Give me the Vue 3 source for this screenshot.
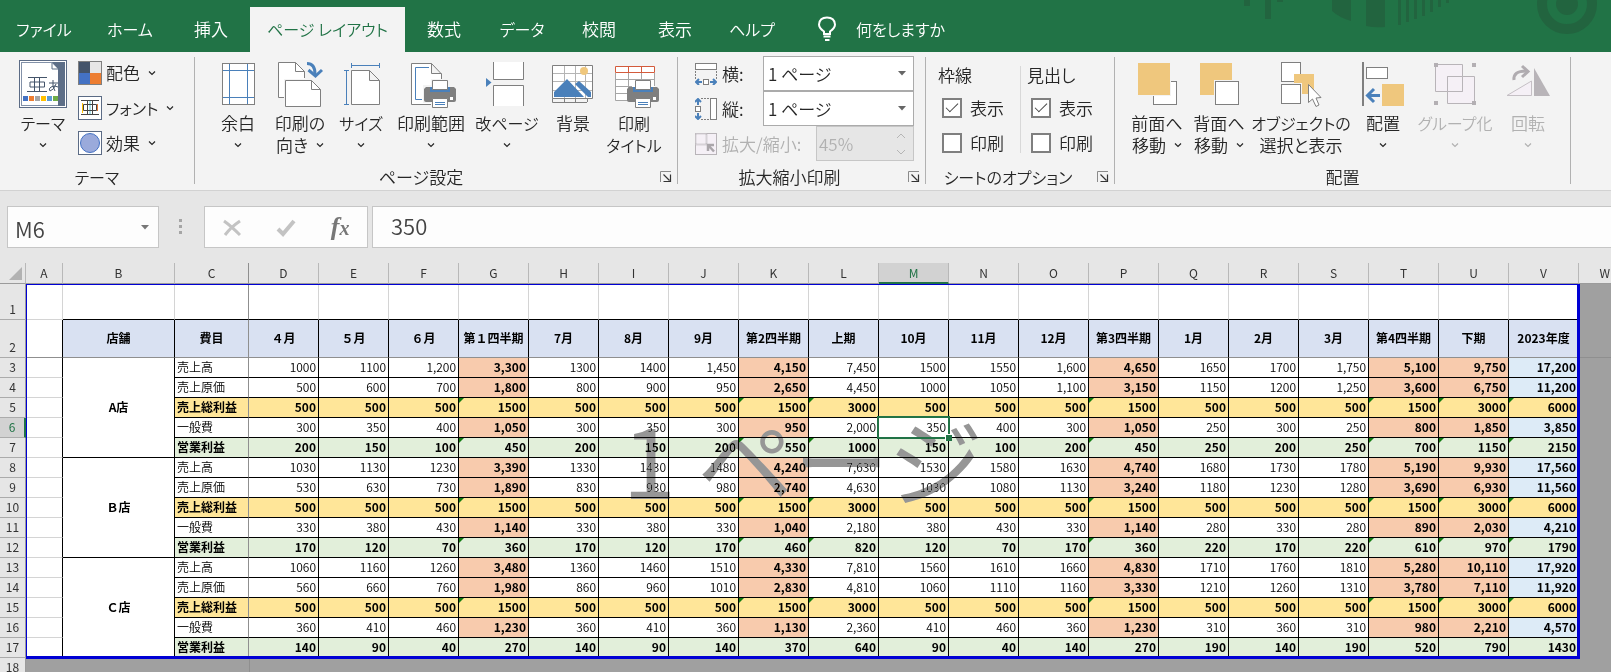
<template>
  <div class="excel">
    <svg class="defs" width="0" height="0" aria-hidden="true">
      <defs>
        <path id="chevron" d="M1 1.5 L4 4.5 L7 1.5" fill="none" stroke="currentColor" stroke-width="1.2" />
        <g id="launcher" fill="none">
          <path d="M0.5 11 V0.5 H11" stroke="#8a8a8a" />
          <path d="M3.5 3.5 L9.5 9.5 M10.5 3.5 V10.5 H3.5" stroke="#333" stroke-width="1.2" />
        </g>
        <g id="printer">
          <path d="M19 27 H47 L49 29 V40 Q49 42 47 42 H19 Q17 42 17 40 V29 Z" fill="#7f7f7f" />
          <path d="M23 27 H43 V32 H23 Z" fill="#4a80ba" />
          <path d="M25.5 20.5 H40.5 V29.5 H25.5 Z M25.5 38.5 H40.5 V47.5 H25.5 Z" fill="#fff" stroke="#7f7f7f" />
          <path d="M28 42.500 H38 M28 44.500 H38" stroke="#4a80ba" />
          <path d="M43 37 H46 V40 H43 Z" fill="#fff" />
        </g>
        <g id="theme">
          <rect x="0.5" y="0.5" width="47" height="47" fill="#fff" stroke="#5b6b85" />
          <path d="M2 2 H46 V46 H2 Z" fill="#8391a8" />
          <path d="M39 2 H46 V46 H39 Z" fill="#5d6e87" />
          <path d="M33 2 H39 V9 Z" fill="#5d6e87" />
          <path d="M3 3 H33 L39 9 V45 H3 Z" fill="#fff" />
          <path d="M33 3 V9 H39" fill="none" stroke="#5d6e87" />
          <path d="M9 17.500 H28 M8 31.500 H28 M15.500 17.500 V31 M20.500 17.500 V31 M11 22 H25.500 V27 H11 Z" fill="none" stroke="#44546a" />
          <path d="M30 23 H39 M34 20 Q33 27 36 31 M37 24 Q35 30 31 31 Q29 29 32 27 Q36 25 39 27" fill="none" stroke="#44546a" />
          <path d="M4 36 h5 v5 h-5z" fill="#4472c4" />
          <path d="M10 36 h5 v5 h-5z" fill="#ed7d31" />
          <path d="M16 36 h5 v5 h-5z" fill="#a5a5a5" />
          <path d="M22 36 h5 v5 h-5z" fill="#ffc000" />
          <path d="M28 36 h5 v5 h-5z" fill="#5b9bd5" />
          <path d="M34 36 h5 v5 h-5z" fill="#70ad47" />
        </g>
        <g id="colors">
          <path d="M0 0 H24 V24 H0 Z" fill="#7f7f7f" />
          <path d="M1 1 H12 V12 H1 Z" fill="#44546a" />
          <path d="M12 1 H23 V12 H12 Z" fill="#e7e6e6" />
          <path d="M1 12 H12 V23 H1 Z" fill="#4472c4" />
          <path d="M12 12 H23 V23 H12 Z" fill="#ed7d31" />
        </g>
        <g id="fonts">
          <rect x="0.5" y="0.5" width="23" height="23" fill="#fff" stroke="#5b6b85" />
          <path d="M4.500 7 V17" stroke="#ffc000" />
          <path d="M12 5 V18" stroke="#5bc5d5" />
          <path d="M19.500 8 V15" stroke="#ed7d31" />
          <path d="M3 4.500 H21 M3 18.500 H21 M9.500 5 V18 M14.500 5 V18 M5.500 8.500 H18.500 V14.500 H5.500 Z" fill="none" stroke="#444" />
        </g>
        <g id="effects">
          <rect x="0.5" y="0.5" width="23" height="23" fill="#fff" stroke="#5b6b85" />
          <circle cx="12" cy="12" r="9.5" fill="#9aaadb" stroke="#4472c4" />
        </g>
        <g id="margins" fill="none">
          <rect x="8.5" y="3.5" width="32" height="41" fill="#fff" stroke="#7f7f7f" />
          <path d="M15.500 4 V44 M33.500 4 V44 M9 10.500 H40 M9 37.500 H40" stroke="#4a80ba" />
        </g>
        <g id="orientation" stroke="#7f7f7f">
          <path d="M2.500 37.500 V2.500 H19.500 L28.500 11.500 V37.500 Z" fill="#fff" stroke="none" />
          <path d="M8 37.500 H2.500 V2.500 H19.500 L28.500 11.500 V18" fill="none" />
          <path d="M19.500 2.500 V11.500 H28.500" fill="none" />
          <path d="M8 19 H37 V38 H8 Z" fill="#f3f3f3" stroke="none" />
          <path d="M9.500 20.500 H35.500 L44.500 29.500 V46.500 H9.500 Z" fill="#fff" />
          <path d="M35.500 20.500 V29.500 H44.500" fill="none" />
          <path d="M31 3.500 Q39 3.500 39 14" fill="none" stroke="#4a80ba" stroke-width="3" />
          <path d="M32.500 10 L39.500 16 L46 10" fill="none" stroke="#4a80ba" stroke-width="3" />
        </g>
        <g id="size">
          <path d="M14.500 10.500 H32.500 L42.500 20.500 V44.500 H14.500 Z M32.500 10.500 V20.500 H42.500" fill="#fff" stroke="#7f7f7f" />
          <path d="M14.500 3 V8 M42.500 3 V8 M14.500 5.500 H42.500 M7 10.500 H12 M7 44.500 H12 M9.500 10.500 V44.500" fill="none" stroke="#4a80ba" />
        </g>
        <g id="area">
          <path d="M4.500 3.500 H24.500 L34.500 14 V44.500 H4.500 Z M24.500 3.500 V13.500 H34.500" fill="#fff" stroke="#7f7f7f" />
          <path d="M22 7.500 H8.500 V39.500 H15" fill="none" stroke="#4a80ba" />
          <path d="M24 19 H36 V26 H24 Z M16 25 H36 V43 H16 Z M24 43 H36 V46 H24 Z" fill="#f3f3f3" />
          <use href="#printer" />
        </g>
        <g id="breaks">
          <path d="M3 18 L8.500 22.500 L3 27 Z" fill="#4a80ba" />
          <path d="M10.500 2 V19.500 H40.500 V2 M10.500 46 V25.500 H40.500 V46" fill="#fff" stroke="#7f7f7f" />
        </g>
        <g id="background">
          <path d="M3.500 5.500 H43.500 V38.500 H3.500 Z" fill="#fff" stroke="#7f7f7f" />
          <path d="M15.500 6 V38 M26.500 6 V38 M36.500 6 V38 M4 13.500 H43 M4 21.500 H43 M4 30.500 H43" stroke="#b5b5b5" />
          <circle cx="35" cy="11" r="4" fill="#efc77d" />
          <path d="M5 37 V32 L18 19 L35 37 Z M26 24 L30 21 L42 32 V37 H39 Z" fill="#4a80ba" />
          <path d="M3.500 38.500 V42.500 H38 M15.500 39 V42 M26.500 39 V42 M38.500 39 V42" fill="none" stroke="#7f7f7f" />
        </g>
        <g id="titles">
          <path d="M5 6 H45 V40 H5 Z" fill="#fff" />
          <path d="M5.500 13 V40.500 H20 M18.500 13 V40 M31.500 13 V20 M44.500 13 V26 M6 19.500 H44 M6 26.500 H22 M6 33.500 H18" fill="none" stroke="#a5a5a5" />
          <path d="M5.500 6.500 H44.500 V12.500 H5.500 Z M18.500 6.500 V12.500 M31.500 6.500 V12.500" fill="none" stroke="#d35b3c" />
          <use href="#printer" />
        </g>
        <g id="forward">
          <rect x="20.500" y="21.500" width="23" height="23" fill="#fff" stroke="#7f7f7f" />
          <path d="M4 2 H38 V36 H4 Z" fill="#f3f3f3" />
          <path d="M5 3 H37 V35 H5 Z" fill="#efc77d" />
        </g>
        <g id="backward">
          <path d="M5 3 H37 V35 H5 Z" fill="#efc77d" />
          <path d="M19 20 H45 V46 H19 Z" fill="#f3f3f3" />
          <rect x="20.500" y="21.500" width="23" height="23" fill="#fff" stroke="#7f7f7f" />
        </g>
        <g id="selection">
          <rect x="4.500" y="2.500" width="19" height="19" fill="#fff" stroke="#7f7f7f" />
          <path d="M17 14 H37 V34 H25 V23 H17 Z" fill="#efc77d" />
          <rect x="4.500" y="24.500" width="19" height="19" fill="#fff" stroke="#7f7f7f" />
          <path d="M31.500 24.500 V42.500 L35.500 39 L39 46.500 L42 45 L39 38 L44 37.500 Z" fill="#fff" stroke="#7f7f7f" />
        </g>
        <g id="align">
          <path d="M4 2 V46" stroke="#7f7f7f" stroke-width="2" />
          <rect x="7.500" y="7.500" width="21" height="11" fill="#fff" stroke="#7f7f7f" />
          <path d="M23 24 H45 V46 H23 Z" fill="#efc77d" />
          <path d="M21 35.500 H9 M15 29 L8.500 35.500 L15 42" fill="none" stroke="#4a80ba" stroke-width="3" />
        </g>
        <g id="group">
          <path d="M4.500 4.500 H31.500 V31.500 H4.500 Z M16.500 16.500 H43.500 V43.500 H16.500 Z" fill="#f5f0f6" stroke="#b8b4b8" />
          <path d="M16.500 31.500 V16.500 H31.500 V31.500 Z" fill="#f5f0f6" stroke="#b8b4b8" />
          <path d="M3 3 h4 v4 h-4z M41 3 h4 v4 h-4z M3 41 h4 v4 h-4z M41 41 h4 v4 h-4z" fill="#b3afb3" />
        </g>
        <g id="rotate">
          <path d="M30 8 V36 H46 Z" fill="#b8b4b8" />
          <path d="M27.500 21 V35.500 H3 Z" fill="#f5f0f6" stroke="#c5c0c5" />
          <path d="M10 20 Q9 11 22 11" fill="none" stroke="#b0acb0" stroke-width="3" />
          <path d="M18 6 L24 11.500 L18 17" fill="none" stroke="#b0acb0" stroke-width="3" />
        </g>
        <g id="fit-width">
          <rect x="0.5" y="0.5" width="21" height="6" fill="#fff" stroke="#7f7f7f" />
          <path d="M0.500 8 V16 M21.500 8 V16" stroke="#7f7f7f" stroke-dasharray="2 1" />
          <rect x="8.500" y="16.500" width="5" height="5" fill="#fff" stroke="#7f7f7f" />
          <path d="M7 19 H2 M4 16 L1 19 L4 22 M15 19 H20 M18 16 L21 19 L18 22" fill="none" stroke="#4a80ba" stroke-width="2" />
        </g>
        <g id="fit-height">
          <rect x="15.500" y="0.500" width="6" height="21" fill="#fff" stroke="#7f7f7f" />
          <path d="M6 0.500 H14 M6 21.500 H14" stroke="#7f7f7f" stroke-dasharray="2 1" />
          <rect x="0.500" y="8.500" width="5" height="5" fill="#fff" stroke="#7f7f7f" />
          <path d="M3 7 V2 M0 4 L3 1 L6 4 M3 15 V20 M0 18 L3 21 L6 18" fill="none" stroke="#4a80ba" stroke-width="2" />
        </g>
        <g id="scale">
          <rect x="0.500" y="0.500" width="21" height="21" fill="#f5f0f6" stroke="#b8b4b8" />
          <rect x="0.500" y="0.500" width="11" height="11" fill="#f5f0f6" stroke="#b8b4b8" stroke-width="2" stroke-dasharray="1 1" />
          <path d="M13 18 V12 H19 M13 12 L19 18.500" fill="none" stroke="#aaa6aa" stroke-width="2.500" />
        </g>
      </defs>
    </svg>

    <nav class="tabs">
      <button v-for="tab in tabs" :key="tab.name" :class="['tab', tab.size, { active: tab.active, kana: tab.kana }]">{{ tab.name }}</button>
      <button class="tell-me">
        <svg width="18" height="26" viewBox="0 0 18 26" fill="none" stroke="#fff" stroke-width="2">
          <path d="M6 18 V15.500 Q1 12 1 8.500 Q1.500 1.500 9 1.500 Q16.500 1.500 17 8.500 Q17 12 12 15.500 V18 Z M5.500 20.500 H12.500 M7 24 H11.500" />
        </svg>
        <span>何をしますか</span>
      </button>
      <svg class="decoration" width="380" height="52" viewBox="0 0 380 52" fill="#22643f">
        <path d="M13 0 h6 v6 h-6z M34 0 h6 v19 h-6z M46 0 h6 v2 h-6z" />
        <path d="M101 0 H120 V21 Q109 18 101 11 Z M135 0 H154 V27 Q144 28 135 26 Z" />
        <path d="M167 0 h3 v25 h-3z M175 0 h3 v22 h-3z M183 0 h3 v19 h-3z M191 0 h3 v16 h-3z M199 0 h3 v12 h-3z M207 0 h3 v7 h-3z M215 0 h3 v3 h-3z" />
        <circle cx="336" cy="4" r="25" fill="none" stroke="#22643f" stroke-width="10" />
        <circle cx="336" cy="4" r="11" />
      </svg>
    </nav>

    <div class="ribbon">
      <section class="group themes">
        <div class="content">
          <button class="big">
            <svg width="48" height="48"><use href="#theme" /></svg>
            <span class="kana">テーマ</span>
            <span class="line"><svg width="8" height="6"><use href="#chevron" /></svg></span>
          </button>
          <div class="stack">
            <button v-for="item in themeItems" :key="item.name" class="small">
              <svg width="24" height="24"><use :href="'#' + item.icon" /></svg>
              <span :class="{ kana: item.kana }">{{ item.name }}</span>
              <svg class="after" width="8" height="6"><use href="#chevron" /></svg>
            </button>
          </div>
        </div>
        <footer class="kana">テーマ</footer>
      </section>

      <section class="group setup">
        <div class="content">
          <button v-for="item in setupItems" :key="item.icon" :class="['big', { kana: item.kana }]" :style="{ width: item.width + 'px' }">
            <svg width="48" height="48"><use :href="'#' + item.icon" /></svg>
            <span>{{ item.lines[0] }}</span>
            <span class="line">{{ item.lines[1] }}<svg v-if="item.menu" width="8" height="6"><use href="#chevron" /></svg></span>
          </button>
        </div>
        <footer>ページ設定</footer>
        <button class="launcher" aria-label="ページ設定"><svg width="12" height="12"><use href="#launcher" /></svg></button>
      </section>

      <section class="group scaling">
        <div class="fields">
          <div class="field">
            <svg width="22" height="22"><use href="#fit-width" /></svg>
            <label for="fit-w">横:</label>
            <div class="combo">
              <select id="fit-w"><option>1 ページ</option></select>
              <svg width="8" height="5"><path d="M0 0 H8 L4 4.500 Z" fill="#666" /></svg>
            </div>
          </div>
          <div class="field">
            <svg width="22" height="22"><use href="#fit-height" /></svg>
            <label for="fit-h">縦:</label>
            <div class="combo">
              <select id="fit-h"><option>1 ページ</option></select>
              <svg width="8" height="5"><path d="M0 0 H8 L4 4.500 Z" fill="#666" /></svg>
            </div>
          </div>
          <div class="field disabled">
            <svg width="22" height="22"><use href="#scale" /></svg>
            <label for="zoom">拡大/縮小:</label>
            <div class="spinner">
              <input id="zoom" type="text" value="45%" disabled>
              <svg width="10" height="22" fill="none" stroke="#b5b5b5"><path d="M1 5 L5 1 L9 5 M1 17 L5 21 L9 17" /></svg>
            </div>
          </div>
        </div>
        <footer>拡大縮小印刷</footer>
        <button class="launcher" aria-label="拡大縮小印刷"><svg width="12" height="12"><use href="#launcher" /></svg></button>
      </section>

      <section class="group options">
        <div class="option-columns">
          <div v-for="(name, i) in ['枠線', '見出し']" :key="name" class="option-column">
            <div class="heading">{{ name }}</div>
            <label class="check" :for="'view' + i"><input :id="'view' + i" type="checkbox" checked>表示</label>
            <label class="check" :for="'print' + i"><input :id="'print' + i" type="checkbox">印刷</label>
          </div>
        </div>
        <footer class="kana">シートのオプション</footer>
        <button class="launcher" aria-label="シートのオプション"><svg width="12" height="12"><use href="#launcher" /></svg></button>
      </section>

      <section class="group arrange">
        <div class="content">
          <button v-for="item in arrangeItems" :key="item.icon" class="big" :disabled="item.disabled" :style="{ width: item.width + 'px' }">
            <svg width="48" height="48"><use :href="'#' + item.icon" /></svg>
            <span :class="{ kana: item.kana }">{{ item.lines[0] }}</span>
            <span class="line">{{ item.lines[1] }}<svg v-if="item.menu" width="8" height="6"><use href="#chevron" /></svg></span>
          </button>
        </div>
        <footer>配置</footer>
      </section>
    </div>

    <div class="formula-bar">
      <div class="name-box">
        <input type="text" value="M6" aria-label="名前ボックス">
        <svg width="8" height="5"><path d="M0 0 H8 L4 4.500 Z" fill="#777" /></svg>
      </div>
      <svg class="dots" width="3" height="16" fill="#a5a5a5"><path d="M0 0 h3 v3 h-3z M0 6 h3 v3 h-3z M0 12 h3 v3 h-3z" /></svg>
      <div class="actions">
        <button aria-label="キャンセル">
          <svg width="18" height="18" fill="none" stroke="#c3c3c3" stroke-width="3"><path d="M1 2 Q8 7 17 16 M17 2 Q8 8 2 16" /></svg>
        </button>
        <button aria-label="入力">
          <svg width="20" height="18" fill="none" stroke="#c3c3c3" stroke-width="4"><path d="M2 10 L7 15 L18 2" /></svg>
        </button>
        <button class="fx" aria-label="関数の挿入"><i>f</i><i class="x">x</i></button>
      </div>
      <input class="formula" type="text" value="350" aria-label="数式バー">
    </div>

    <main class="sheet">
      <table>
        <colgroup>
          <col class="col-num"><col class="col-a"><col class="col-b"><col class="col-c">
          <col v-for="n in 19" :key="n" class="col-value">
          <col>
        </colgroup>
        <thead>
          <tr>
            <th class="corner"><svg width="14" height="14"><path d="M13 0 V13 H0 Z" fill="#b2b2b2" /></svg></th>
            <th v-for="l in letters" :key="l" :class="{ selected: l === 'M', frozen: l === 'C', last: l === 'W' }">{{ l }}</th>
          </tr>
        </thead>
        <tbody>
          <tr class="row-1">
            <th>1</th>
            <td class="blank"></td>
            <td v-for="n in 21" :key="n" :class="['blank', 'top', { frozen: n === 2 }]"></td>
            <td class="outside"></td>
          </tr>
          <tr class="row-2">
            <th>2</th>
            <td class="blank edge"></td>
            <td v-for="(h, i) in headings" :key="h" :class="['heading-cell', { frozen: i === 1 }]">{{ h }}</td>
            <td class="outside"></td>
          </tr>
          <tr v-for="(row, r) in rows" :key="r" :class="row.kind">
            <th :class="{ selected: r === 3 }">{{ r + 3 }}</th>
            <td class="blank edge"></td>
            <td v-if="r % 5 === 0" class="store" rowspan="5">{{ stores[r / 5] }}</td>
            <td class="item frozen">{{ row.name }}</td>
            <td v-for="(v, c) in row.values" :key="c" :class="cellClass(row, r, c)">{{ v }}</td>
            <td class="outside"></td>
          </tr>
          <tr>
            <th>18</th>
            <td class="outside" colspan="3"></td>
            <td class="outside after-freeze" colspan="20"></td>
          </tr>
        </tbody>
      </table>
      <div class="watermark">1 ページ</div>
      <div class="print-area"></div>
    </main>
  </div>
</template>

<script setup>
const tabs = [
  { name: 'ファイル', size: 'file', kana: true },
  { name: 'ホーム', size: 'home', kana: true },
  { name: '挿入' },
  { name: 'ページ レイアウト', size: 'layout', active: true, kana: true },
  { name: '数式' },
  { name: 'データ', kana: true },
  { name: '校閲', size: 'narrow' },
  { name: '表示', size: 'narrow' },
  { name: 'ヘルプ', kana: true },
]

const themeItems = [
  { name: '配色', icon: 'colors' },
  { name: 'フォント', icon: 'fonts', kana: true },
  { name: '効果', icon: 'effects' },
]

const setupItems = [
  { icon: 'margins', width: 60, lines: ['余白', ''], menu: true },
  { icon: 'orientation', width: 64, lines: ['印刷の', '向き'], menu: true },
  { icon: 'size', width: 58, lines: ['サイズ', ''], menu: true, kana: true },
  { icon: 'area', width: 82, lines: ['印刷範囲', ''], menu: true },
  { icon: 'breaks', width: 70, lines: ['改ページ', ''], menu: true, kana: true },
  { icon: 'background', width: 62, lines: ['背景', ''] },
  { icon: 'titles', width: 60, lines: ['印刷', 'タイトル'], kana: true },
]

const arrangeItems = [
  { icon: 'forward', width: 62, lines: ['前面へ', '移動'], menu: true },
  { icon: 'backward', width: 62, lines: ['背面へ', '移動'], menu: true },
  { icon: 'selection', width: 102, lines: ['オブジェクトの', '選択と表示'], kana: true },
  { icon: 'align', width: 62, lines: ['配置', ''], menu: true },
  { icon: 'group', width: 82, lines: ['グループ化', ''], menu: true, disabled: true, kana: true },
  { icon: 'rotate', width: 64, lines: ['回転', ''], menu: true, disabled: true },
]

const letters = 'ABCDEFGHIJKLMNOPQRSTUVW'.split('')

const headings = [
  '店舗', '費目', '４月', '５月', '６月', '第１四半期', '7月', '8月', '9月', '第2四半期', '上期',
  '10月', '11月', '12月', '第3四半期', '1月', '2月', '3月', '第4四半期', '下期', '2023年度',
]

const stores = ['A店', 'Ｂ店', 'Ｃ店']

// one line per sheet row, columns D to V
const lines = [
  '1000 1100 1,200 3,300 1300 1400 1,450 4,150 7,450 1500 1550 1,600 4,650 1650 1700 1,750 5,100 9,750 17,200',
  '500 600 700 1,800 800 900 950 2,650 4,450 1000 1050 1,100 3,150 1150 1200 1,250 3,600 6,750 11,200',
  '500 500 500 1500 500 500 500 1500 3000 500 500 500 1500 500 500 500 1500 3000 6000',
  '300 350 400 1,050 300 350 300 950 2,000 350 400 300 1,050 250 300 250 800 1,850 3,850',
  '200 150 100 450 200 150 200 550 1000 150 100 200 450 250 200 250 700 1150 2150',
  '1030 1130 1230 3,390 1330 1430 1480 4,240 7,630 1530 1580 1630 4,740 1680 1730 1780 5,190 9,930 17,560',
  '530 630 730 1,890 830 930 980 2,740 4,630 1030 1080 1130 3,240 1180 1230 1280 3,690 6,930 11,560',
  '500 500 500 1500 500 500 500 1500 3000 500 500 500 1500 500 500 500 1500 3000 6000',
  '330 380 430 1,140 330 380 330 1,040 2,180 380 430 330 1,140 280 330 280 890 2,030 4,210',
  '170 120 70 360 170 120 170 460 820 120 70 170 360 220 170 220 610 970 1790',
  '1060 1160 1260 3,480 1360 1460 1510 4,330 7,810 1560 1610 1660 4,830 1710 1760 1810 5,280 10,110 17,920',
  '560 660 760 1,980 860 960 1010 2,830 4,810 1060 1110 1160 3,330 1210 1260 1310 3,780 7,110 11,920',
  '500 500 500 1500 500 500 500 1500 3000 500 500 500 1500 500 500 500 1500 3000 6000',
  '360 410 460 1,230 360 410 360 1,130 2,360 410 460 360 1,230 310 360 310 980 2,210 4,570',
  '140 90 40 270 140 90 140 370 640 90 40 140 270 190 140 190 520 790 1430',
]

const items = [
  { name: '売上高', kind: 'plain' },
  { name: '売上原価', kind: 'plain' },
  { name: '売上総利益', kind: 'gross' },
  { name: '一般費', kind: 'plain' },
  { name: '営業利益', kind: 'profit' },
]

const rows = lines.map((line, i) => ({ ...items[i % 5], values: line.split(' ') }))

const quarters = [3, 7, 12, 16, 17]

function cellClass(row, r, c) {
  const total = quarters.includes(c)
  const plain = row.kind === 'plain'
  return {
    value: true,
    quarter: plain && total,
    year: plain && c === 18,
    flag: !plain && r !== 14 && (total || c === 8 || c === 18),
    active: r === 3 && c === 9,
  }
}
</script>

<style>
body {
  margin: 0;
  overflow: hidden;
}
</style>

<style scoped>
.excel {
  display: flex;
  flex-direction: column;
  height: 100vh;
  overflow: hidden;
  background: #e6e6e6;
  color: #262626;
  font-family: "Noto Sans CJK JP", sans-serif;
  font-size: 17px;
  font-weight: 350;
  font-feature-settings: "palt";
  line-height: 22px;
}

.defs {
  position: absolute;
}

button, input, select {
  box-sizing: border-box;
  margin: 0;
  padding: 0;
  border: 0;
  border-radius: 0;
  background: none;
  color: inherit;
  font: inherit;
  font-feature-settings: inherit;
  white-space: nowrap;
}

.kana {
  font-size: 16px;
}

/* tabs */
.tabs {
  display: flex;
  flex: none;
  align-items: flex-end;
  height: 52px;
  background: #217346;
  color: #fff;
}

.tab {
  flex: none;
  width: 78px;
  height: 45px;
  padding-bottom: 2px;
}

.tab.file {
  width: 88px;
}

.tab.home {
  width: 84px;
}

.tab.layout {
  width: 155px;
}

.tab.narrow {
  width: 76px;
}

.tab.active {
  background: #f3f3f3;
  color: #217346;
}

.tell-me {
  display: flex;
  flex: none;
  align-items: center;
  gap: 20px;
  height: 45px;
  margin-left: 27px;
  padding-bottom: 2px;
  font-size: 16px;
}

.decoration {
  flex: none;
  margin-left: auto;
}

/* ribbon */
.ribbon {
  display: flex;
  flex: none;
  height: 138px;
  border-bottom: 1px solid #d2d2d2;
  background: #f3f3f3;
}

.group {
  position: relative;
  display: flex;
  flex: none;
  flex-direction: column;
  justify-content: space-between;
  box-sizing: border-box;
  margin: 5px 0 6px;
  border-right: 1px solid #b1b1b1;
}

.themes {
  width: 195px;
}

.setup {
  width: 483px;
}

.scaling {
  width: 248px;
}

.options {
  width: 189px;
}

.arrange {
  width: 456px;
}

.group footer {
  height: 18px;
  line-height: 22px;
  text-align: center;
}

.scaling footer, .options footer {
  padding-right: 24px;
}

.setup footer {
  padding-right: 30px;
}

.launcher {
  position: absolute;
  right: 5px;
  bottom: 1px;
  width: 12px;
  height: 12px;
}

.launcher svg {
  display: block;
}

.content {
  display: flex;
  padding: 3px 12px 0 13px;
}

.arrange .content {
  padding: 3px 10px 0 11px;
}

.themes .content {
  padding: 3px 0 0 19px;
  gap: 11px;
}

.big {
  display: flex;
  flex: none;
  flex-direction: column;
  align-items: center;
}

.big > svg {
  overflow: visible;
  margin-bottom: 4px;
}

.line {
  display: flex;
  align-items: center;
  gap: 8px;
  height: 22px;
}

.big:disabled, .disabled {
  color: #b1b1b1;
}

.stack {
  display: flex;
  flex-direction: column;
  gap: 11px;
  padding-top: 1px;
}

.small {
  display: flex;
  align-items: center;
  gap: 4px;
  height: 24px;
}

.small .after {
  margin-left: 4px;
}

.fields {
  display: flex;
  flex-direction: column;
  padding: 0 11px 0 17px;
  margin-top: -1px;
}

.field {
  display: flex;
  align-items: center;
  gap: 5px;
  height: 35px;
  white-space: nowrap;
}

.combo, .spinner {
  display: flex;
  align-items: center;
  box-sizing: border-box;
  width: 151px;
  height: 35px;
  margin-left: auto;
  padding-right: 7px;
  border: 1px solid #ababab;
  background: #fff;
}

.combo select {
  flex: 1;
  min-width: 0;
  height: 33px;
  padding-left: 4px;
  appearance: none;
}

.spinner {
  width: 98px;
  background: #e6e6e6;
  border-color: #c6c6c6;
}

.spinner input {
  flex: 1;
  min-width: 0;
  padding-left: 2px;
}

.option-columns {
  display: flex;
  padding: 9px 0 0 12px;
}

.option-column {
  width: 82px;
}

.option-column + .option-column {
  padding-left: 6px;
  border-left: 1px solid #d8d8d8;
}

.heading {
  height: 22px;
  line-height: 18px;
}

.check {
  display: flex;
  align-items: center;
  gap: 8px;
  height: 20px;
  margin: 10px 0 15px 4px;
}

.check:last-child {
  margin-bottom: 0;
}

.check input {
  width: 20px;
  height: 20px;
  border: 2px solid #7f7f7f;
  background: #fff;
  appearance: none;
}

.check input:checked::after {
  content: "";
  display: block;
  width: 11px;
  height: 5px;
  margin: 3px 0 0 2px;
  border: solid #444;
  border-width: 0 0 1px 1px;
  transform: rotate(-45deg);
}

/* formula bar */
.formula-bar {
  display: flex;
  flex: none;
  align-items: center;
  height: 42px;
  padding: 15px 0 15px 7px;
  color: #444;
  font-size: 22px;
}

.name-box, .actions, .formula {
  box-sizing: border-box;
  height: 42px;
  border: 1px solid #c6c6c6;
  background: #fdfdfd;
}

.name-box {
  display: flex;
  flex: none;
  align-items: center;
  width: 152px;
  padding: 0 9px 0 7px;
}

.name-box input {
  flex: 1;
  min-width: 0;
  height: 40px;
  padding-top: 2px;
}

.dots {
  flex: none;
  margin: 0 22px 0 20px;
}

.actions {
  display: flex;
  flex: none;
  align-items: center;
  justify-content: space-around;
  width: 164px;
}

.fx {
  font-family: "Liberation Serif", serif;
  font-weight: 700;
  font-size: 26px;
  color: #777;
}

.fx .x {
  font-size: 20px;
}

.formula {
  flex: 1;
  min-width: 0;
  margin-left: 4px;
  padding: 0 0 4px 18px;
  border-right: 0;
}

/* sheet */
.sheet {
  position: relative;
  flex: 1;
  min-height: 0;
  overflow: hidden;
  background: #a0a0a0;
  color: #000;
  font-size: 12px;
  font-feature-settings: normal;
  line-height: 17px;
}

table {
  width: 100%;
  min-width: 1600px;
  border-collapse: separate;
  border-spacing: 0;
  table-layout: fixed;
}

.col-num {
  width: 26px;
}

.col-a {
  width: 37px;
}

.col-b {
  width: 112px;
}

.col-c {
  width: 74px;
}

.col-value {
  width: 70px;
}

th, td {
  box-sizing: border-box;
  height: 20px;
  padding: 0 0 2px;
  border: 0 solid #000;
  border-width: 0 1px 1px 0;
  white-space: nowrap;
  background: #fff;
}

th {
  background: #e6e6e6;
  border-color: #ababab;
  color: #333;
  font-weight: 400;
}

thead th {
  height: 21px;
  border-right-color: #b8b8b8;
  border-bottom-color: #9b9b9b;
}

thead th.last {
  padding-right: 1px;
  border-right: 0;
  text-align: right;
}

th.corner {
  padding-right: 2px;
}

.corner svg {
  display: block;
  margin: 4px 0 0 auto;
}

tbody th {
  border-right-color: #9b9b9b;
  vertical-align: bottom;
}

th.selected {
  background: #d2d2d2;
  color: #217346;
}

thead th.selected {
  padding-bottom: 1px;
  border-bottom: 2px solid #217346;
}

tbody th.selected {
  border-right: 2px solid #217346;
}

.row-1 td, .row-1 th {
  height: 36px;
}

.row-2 td, .row-2 th {
  height: 38px;
}

td.blank {
  border-color: #d4d4d4;
}

td.top {
  border-bottom-color: #000;
}

td.edge {
  border-right-color: #000;
}

.row-2 td, .row-2 td.outside {
  border-bottom-color: #8f8f8f;
}

.heading-cell {
  background: #d9e1f2;
  font-weight: 700;
  text-align: center;
}

td.frozen, th.frozen {
  border-right-color: #8f8f8f;
}

.store {
  font-weight: 700;
  text-align: center;
}

.item {
  padding-left: 2px;
}

.value {
  position: relative;
  padding-right: 2px;
  text-align: right;
}

.quarter {
  background: #f8cbad;
  font-weight: 700;
}

.year {
  background: #ddebf7;
  font-weight: 700;
}

.gross .item, .gross .value {
  background: #ffe699;
  font-weight: 700;
}

.profit .item, .profit .value {
  background: #e2efda;
  font-weight: 700;
}

.flag::before {
  content: "";
  position: absolute;
  top: 0;
  left: 0;
  border: solid transparent;
  border-width: 5px 5px 0 0;
  border-top-color: #107c10;
}

.value.active::before {
  content: "";
  position: absolute;
  z-index: 2;
  inset: -2px;
  border: 2px solid #217346;
}

.value.active::after {
  content: "";
  position: absolute;
  z-index: 3;
  right: -4px;
  bottom: -4px;
  width: 6px;
  height: 6px;
  border: solid #fff;
  border-width: 1px 0 0 1px;
  background: #217346;
}

td.outside {
  border-color: #a0a0a0;
  border-right: 0;
  background: #a0a0a0;
}

td.after-freeze {
  border-left: 1px solid #8f8f8f;
}

/* page break preview overlays */
.watermark, .print-area {
  position: absolute;
  top: 21px;
  left: 26px;
  box-sizing: border-box;
  width: 1554px;
  height: 375px;
  pointer-events: none;
}

.watermark {
  display: flex;
  align-items: center;
  justify-content: center;
  padding-bottom: 28px;
  color: #969696;
  font-size: 96px;
  font-weight: 400;
  mix-blend-mode: darken;
}

.print-area {
  border: solid #0000d4;
  border-width: 1px 3px 3px 1px;
}
</style>
